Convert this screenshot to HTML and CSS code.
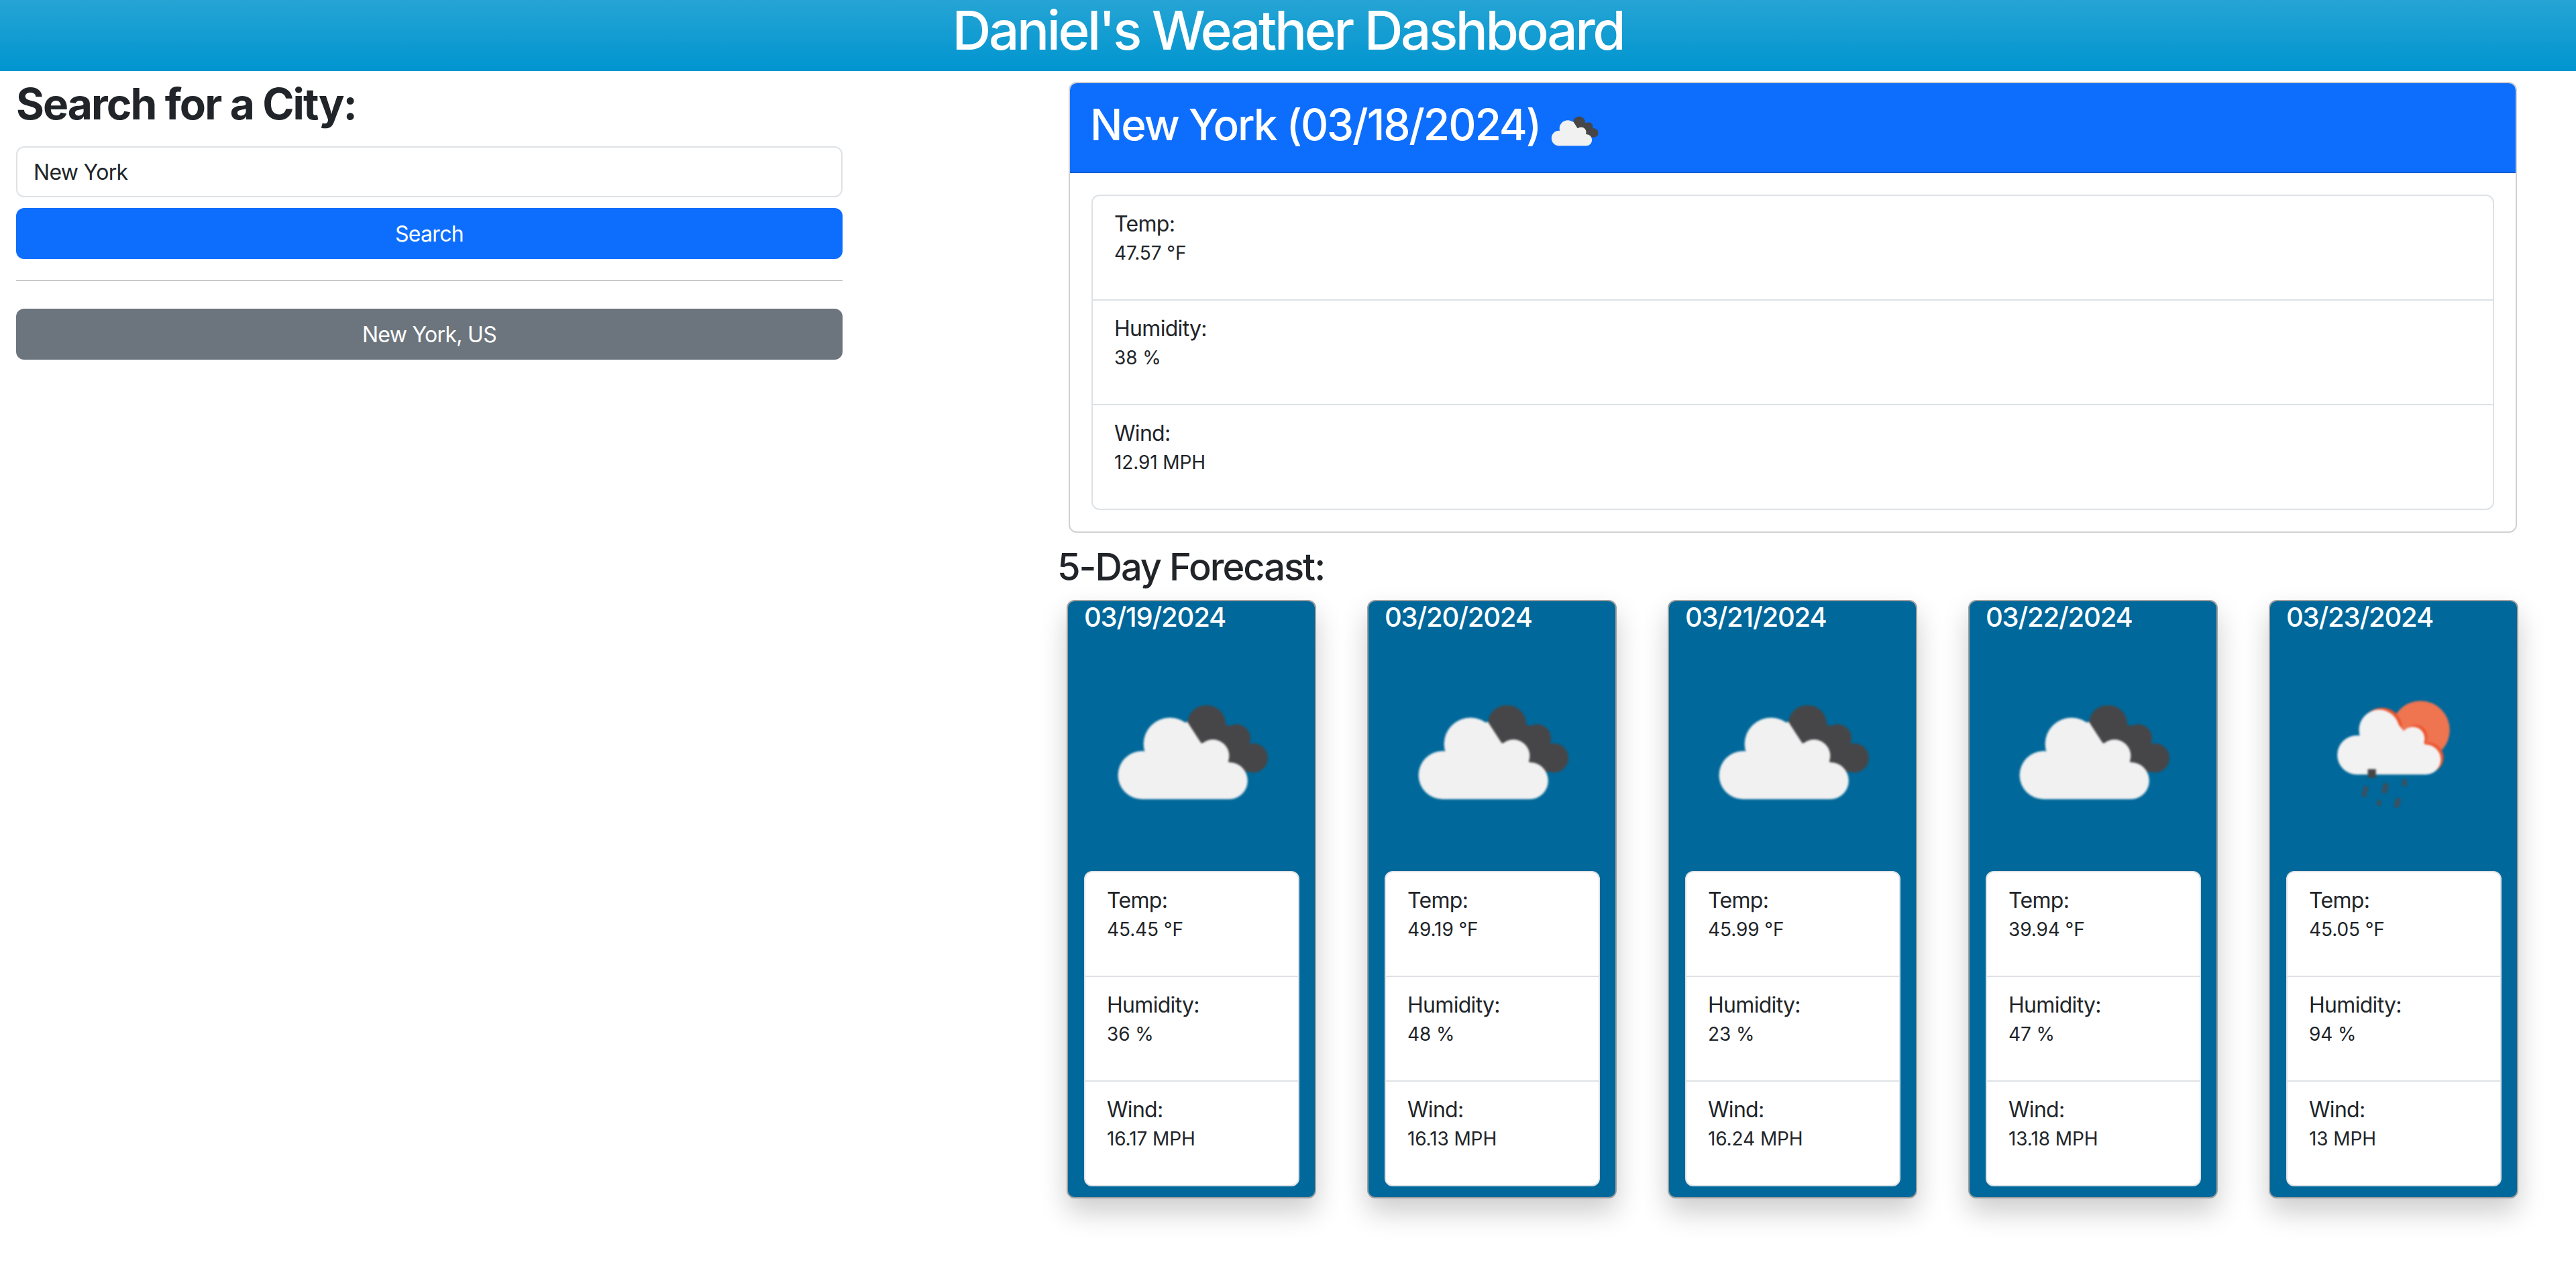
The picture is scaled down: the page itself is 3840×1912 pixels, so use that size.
FILE: index.html
```html
<!DOCTYPE html>
<html lang="en">
<head>
    <meta charset="UTF-8">
    <title>Daniel's Weather Dashboard</title>
    <link rel="stylesheet" href="styles.css">
</head>
<body>
    <svg class="defs" width="0" height="0">
        <symbol id="clouds" viewBox="0 0 100 100">
            <g fill="#464648">
                <circle cx="57" cy="42.4" r="9"/>
                <circle cx="71" cy="48.8" r="6.5"/>
                <circle cx="78.8" cy="58" r="6.8"/>
                <path d="M49 45 L64 42 L72 44 L84 61 L74 65 L60 64Z"/>
            </g>
            <g fill="#f1f1f1">
                <circle cx="40" cy="51.5" r="12.3"/>
                <circle cx="27" cy="66" r="11.2"/>
                <circle cx="60" cy="57" r="7.6"/>
                <circle cx="67.6" cy="68.6" r="8.6"/>
                <path d="M27 66 L30 54 L48 41 L54.5 51 L60 52 L67.5 60 L67 77.2 L27 77.2Z"/>
            </g>
        </symbol>
        <symbol id="rain" viewBox="0 0 100 100">
            <circle cx="62.6" cy="45" r="13.6" fill="#ef7450"/>
            <g fill="#ec5530" transform="translate(1.3 -0.9)">
                <circle cx="43.3" cy="44.9" r="9.4"/>
                <circle cx="59" cy="49" r="5.5"/>
                <circle cx="65" cy="58.7" r="7"/>
            </g>
            <g fill="#f2f2f2">
                <circle cx="43.3" cy="44.9" r="9.4"/>
                <circle cx="32.9" cy="56.6" r="9.1"/>
                <circle cx="59" cy="49" r="5.5"/>
                <circle cx="65" cy="58.7" r="7"/>
                <path d="M33 48 L52 42 L56 47 L60 46 L65 52 L65 65.7 L33 65.7Z"/>
            </g>
            <rect x="38" y="63.2" width="3.8" height="4" fill="#464648"/>
            <g fill="#4c4a4e" opacity="0.75">
                <rect x="35.6" y="71.2" width="2.2" height="4.8" transform="rotate(15 36.6 73.6)"/>
                <rect x="44.8" y="69.8" width="2.6" height="4.6" transform="rotate(15 46 72)"/>
                <rect x="54" y="68" width="2.2" height="3"/>
                <rect x="42.2" y="77.6" width="2" height="2.6"/>
                <rect x="50.6" y="76.6" width="2.4" height="4.4" transform="rotate(15 51.7 78.8)"/>
            </g>
        </symbol>
    </svg>

    <header class="top-bar">
        <h1>Daniel's Weather Dashboard</h1>
    </header>

    <main class="page">
        <section class="search">
            <h2>Search for a City:</h2>
            <input class="city-input" type="text" value="New York">
            <button class="btn btn-primary">Search</button>
            <hr>
            <button class="btn btn-secondary">New York, US</button>
        </section>

        <section class="results">
            <div class="today">
                <div class="today-header">
                    <h2>New York (03/18/2024)</h2>
                    <svg class="icon-small"><use href="#clouds"/></svg>
                </div>
                <div class="today-body">
                    <ul class="stats">
                        <li>Temp:<p>47.57 °F</p></li>
                        <li>Humidity:<p>38 %</p></li>
                        <li>Wind:<p>12.91 MPH</p></li>
                    </ul>
                </div>
            </div>

            <h3>5-Day Forecast:</h3>

            <div class="forecast">
                <div class="day">
                    <h5>03/19/2024</h5>
                    <svg class="icon"><use href="#clouds"/></svg>
                    <ul class="stats">
                        <li>Temp:<p>45.45 °F</p></li>
                        <li>Humidity:<p>36 %</p></li>
                        <li>Wind:<p>16.17 MPH</p></li>
                    </ul>
                </div>
                <div class="day">
                    <h5>03/20/2024</h5>
                    <svg class="icon"><use href="#clouds"/></svg>
                    <ul class="stats">
                        <li>Temp:<p>49.19 °F</p></li>
                        <li>Humidity:<p>48 %</p></li>
                        <li>Wind:<p>16.13 MPH</p></li>
                    </ul>
                </div>
                <div class="day">
                    <h5>03/21/2024</h5>
                    <svg class="icon"><use href="#clouds"/></svg>
                    <ul class="stats">
                        <li>Temp:<p>45.99 °F</p></li>
                        <li>Humidity:<p>23 %</p></li>
                        <li>Wind:<p>16.24 MPH</p></li>
                    </ul>
                </div>
                <div class="day">
                    <h5>03/22/2024</h5>
                    <svg class="icon"><use href="#clouds"/></svg>
                    <ul class="stats">
                        <li>Temp:<p>39.94 °F</p></li>
                        <li>Humidity:<p>47 %</p></li>
                        <li>Wind:<p>13.18 MPH</p></li>
                    </ul>
                </div>
                <div class="day">
                    <h5>03/23/2024</h5>
                    <svg class="icon"><use href="#rain"/></svg>
                    <ul class="stats">
                        <li>Temp:<p>45.05 °F</p></li>
                        <li>Humidity:<p>94 %</p></li>
                        <li>Wind:<p>13 MPH</p></li>
                    </ul>
                </div>
            </div>
        </section>
    </main>
</body>
</html>
```

FILE: styles.css
```css
* {
    box-sizing: border-box;
}

body {
    margin: 0;
    min-height: 1912px;
    background: #fff;
    color: #212529;
    font-family: Inter, "Liberation Sans", sans-serif;
    font-size: 32px;
    line-height: 1.5;
    letter-spacing: -0.7px;
}

.defs {
    position: absolute;
}

.top-bar {
    height: 106px;
    background: linear-gradient(#26a4d4, #0095d0);
    text-align: center;
    color: #fff;
}

.top-bar h1 {
    margin: 0;
    font-size: 80px;
    font-weight: 500;
    line-height: 90px;
    letter-spacing: -3.4px;
}

.page {
    display: flex;
}

/* left column */
.search {
    width: 1280px;
    padding: 10px 24px 0;
}

.search h2 {
    margin: 0 0 25px;
    font-size: 64px;
    font-weight: 700;
    line-height: 77px;
    letter-spacing: -1.9px;
}

.city-input {
    display: block;
    width: 100%;
    height: 76px;
    padding: 0 24px;
    border: 2px solid #dee2e6;
    border-radius: 12px;
    font: inherit;
    letter-spacing: inherit;
    color: #212529;
}

.btn {
    display: block;
    width: 100%;
    height: 76px;
    padding-top: 2px;
    border: none;
    border-radius: 12px;
    font: inherit;
    letter-spacing: inherit;
    color: #fff;
}

.btn-primary {
    margin-top: 16px;
    background: #0d6efd;
}

.btn-secondary {
    background: #6c757d;
}

hr {
    height: 2px;
    margin: 31px 0 41px;
    border: none;
    background: #c8c9ca;
}

/* right column */
.results {
    padding: 16px 0 0 298px;
}

.today {
    width: 2159px;
    margin-left: 15px;
    border: 2px solid #d0d1d2;
    border-radius: 12px;
    overflow: hidden;
}

.today-header {
    display: flex;
    align-items: center;
    padding: 16px 32px 16px 30px;
    background: #0d6efd;
    border-bottom: 2px solid #0b5ed7;
    color: #fff;
}

.today-header h2 {
    margin: 0 0 8px;
    font-size: 64px;
    font-weight: 500;
    line-height: 92px;
    letter-spacing: -2.1px;
}

.icon-small {
    width: 100px;
    height: 100px;
    margin-left: 1px;
    filter: blur(0.6px);
}

.today-body {
    padding: 32px;
}

.stats {
    margin: 0;
    padding: 0;
    list-style: none;
    background: #fff;
    border: 2px solid #dee2e6;
    border-radius: 12px;
}

.stats li {
    height: 154px;
    padding: 18px 32px 0;
    color: #212529;
}

.stats li + li {
    height: 156px;
    border-top: 2px solid #dee2e6;
}

.stats p {
    margin: -2px 0 0;
    font-size: 28px;
    letter-spacing: -0.1px;
}

h3 {
    margin: 18px 0 15px -2px;
    font-size: 56px;
    font-weight: 500;
    line-height: 67px;
    letter-spacing: -2px;
}

.forecast {
    display: flex;
    gap: 76px;
    margin-left: 12px;
}

.day {
    width: 372px;
    padding: 0 23px 16px 24px;
    background: #00689a;
    border: 2px solid #a0a0a0;
    border-radius: 12px;
    box-shadow: 0 20px 40px rgba(0, 0, 0, 0.2);
    color: #fff;
}

.day h5 {
    margin: 0;
    font-size: 40px;
    font-weight: 500;
    line-height: 48px;
    letter-spacing: -1.2px;
}

.icon {
    display: block;
    width: 320px;
    height: 320px;
    margin-bottom: 34px;
    filter: blur(1.6px);
}
```
